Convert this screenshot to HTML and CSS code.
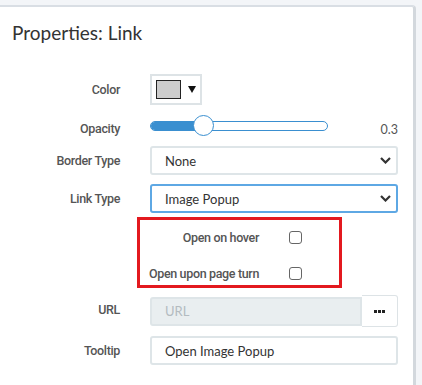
FILE: index.html
```html
<!DOCTYPE html>
<html lang="en">
<head>
    <meta charset="UTF-8">
    <meta name="viewport" content="width=device-width, initial-scale=1.0">
    <title>Properties: Link</title>
    <link rel="stylesheet" href="styles.css">
</head>
<body>
    <div class="card">
        <h2 class="title">Properties: Link</h2>

        <form class="props">
            <div class="row row-color">
                <label class="label">Color</label>
                <div class="control">
                    <button type="button" class="color-btn">
                        <span class="swatch"></span>
                        <svg class="caret" width="8" height="7" viewBox="0 0 8 7"><path d="M0 0H8L4 7Z" fill="#111"/></svg>
                    </button>
                </div>
            </div>

            <div class="row row-opacity">
                <label class="label">Opacity</label>
                <div class="control opacity">
                    <div class="slider">
                        <div class="fill" style="width: 30%"></div>
                        <div class="thumb" style="left: 30%"></div>
                    </div>
                    <span class="value">0.3</span>
                </div>
            </div>

            <div class="row">
                <label class="label">Border Type</label>
                <div class="control select-wrap">
                    <select class="field">
                        <option>None</option>
                    </select>
                    <svg class="chevron" width="11" height="7" viewBox="0 0 11 7"><path d="M1 1L5.5 5.5L10 1" fill="none" stroke="#333" stroke-width="2.2"/></svg>
                </div>
            </div>

            <div class="row">
                <label class="label">Link Type</label>
                <div class="control select-wrap">
                    <select class="field active">
                        <option>Image Popup</option>
                    </select>
                    <svg class="chevron" width="11" height="7" viewBox="0 0 11 7"><path d="M1 1L5.5 5.5L10 1" fill="none" stroke="#333" stroke-width="2.2"/></svg>
                </div>
            </div>

            <div class="highlight">
                <div class="check-row">
                    <label class="check-label">Open on hover</label>
                    <input type="checkbox" class="check">
                </div>
                <div class="check-row">
                    <label class="check-label">Open upon page turn</label>
                    <input type="checkbox" class="check">
                </div>
            </div>

            <div class="row row-url">
                <label class="label">URL</label>
                <div class="control url">
                    <input type="text" class="field disabled" placeholder="URL" disabled>
                    <button type="button" class="more-btn">
                        <span class="dot"></span><span class="dot"></span><span class="dot"></span>
                    </button>
                </div>
            </div>

            <div class="row">
                <label class="label">Tooltip</label>
                <div class="control">
                    <input type="text" class="field" value="Open Image Popup">
                </div>
            </div>
        </form>
    </div>
</body>
</html>
```

FILE: styles.css
```css
* {
    box-sizing: border-box;
}
body {
    margin: 0;
    font-family: Lato, "Open Sans", sans-serif;
    background-color: #f3f5f8;
    color: #333;
}
.card {
    width: 416px;
    height: 390px;
    margin-top: 5px;
    background: white;
    border-top: 2px solid #d9dee4;
    border-right: 3px solid #d3d8dd;
    border-top-right-radius: 4px;
    padding-top: 13px;
}
.title {
    margin: 0 0 0 12px;
    font-size: 19px;
    font-weight: normal;
    line-height: 26px;
    color: #333;
}
.row {
    display: grid;
    grid-template-columns: 120px 248px;
    column-gap: 30px;
    align-items: center;
    margin-top: 9px;
}
.row-color {
    margin-top: 28px;
}
.row-url {
    margin-top: 7px;
    align-items: start;
}
.label,
.check-label {
    text-align: right;
    font-family: Roboto, Lato, sans-serif;
    font-size: 12.5px;
    font-weight: 500;
    letter-spacing: -0.35px;
    color: #555;
}
.row-opacity .label {
    margin-top: 6px;
}
.row-url .label {
    line-height: 29px;
}
.control {
    display: flex;
    align-items: center;
}
.color-btn {
    width: 52px;
    height: 31px;
    padding: 0 0 0 4px;
    border: 2px solid #dde3e6;
    background: white;
    display: flex;
    align-items: center;
    cursor: pointer;
}
.swatch {
    width: 25px;
    height: 19px;
    border: 1px solid #222;
    background: #cccccc;
}
.caret {
    margin-left: 7px;
}
.opacity {
    height: 23px;
}
.slider {
    position: relative;
    width: 178px;
    height: 10px;
    border: 1px solid #3a8fd0;
    border-radius: 5px;
}
.fill {
    height: 100%;
    background: #3a8fd0;
    border-radius: 4px 0 0 4px;
}
.thumb {
    position: absolute;
    top: 50%;
    width: 21px;
    height: 21px;
    margin: -10.5px 0 0 -10.5px;
    border: 1.5px solid #3a8fd0;
    border-radius: 50%;
    background: white;
}
.value {
    margin-left: auto;
    margin-top: 7px;
    font-size: 12.5px;
    color: #555;
}
.select-wrap {
    display: grid;
}
.select-wrap > * {
    grid-area: 1 / 1;
}
.field {
    width: 100%;
    height: 29px;
    padding: 0 13px;
    border: 2px solid #dee5e8;
    border-radius: 3px;
    background: white;
    font-family: inherit;
    font-size: 13px;
    color: #333;
    appearance: none;
    outline: none;
}
.field.active {
    border-color: #5ea8e4;
}
.field.disabled {
    background: #e9eef0;
    border-radius: 3px 0 0 3px;
}
.field.disabled::placeholder {
    color: #b3bbc0;
}
.chevron {
    justify-self: end;
    margin-right: 7px;
    pointer-events: none;
}
.highlight {
    width: 205px;
    margin: 4px 0 0 137px;
    border: 3px solid #e3191f;
    padding: 6px 0 1px;
    display: flex;
    flex-direction: column;
    gap: 14px;
}
.check-row {
    display: grid;
    grid-template-columns: 119px 13px;
    column-gap: 30px;
    align-items: center;
    height: 22px;
}
.check-label {
    white-space: nowrap;
}
.check {
    appearance: none;
    width: 13px;
    height: 13px;
    margin: 0;
    border: 1.5px solid #666;
    border-radius: 3px;
    background: white;
}
.url .field {
    flex: 1;
}
.more-btn {
    width: 36px;
    height: 32px;
    border: 1px solid #dde3e6;
    border-left: none;
    border-radius: 0 3px 3px 0;
    background: white;
    display: flex;
    align-items: center;
    justify-content: center;
    gap: 1px;
    padding: 0;
    cursor: pointer;
}
.dot {
    width: 3px;
    height: 3px;
    background: #222;
}
```
